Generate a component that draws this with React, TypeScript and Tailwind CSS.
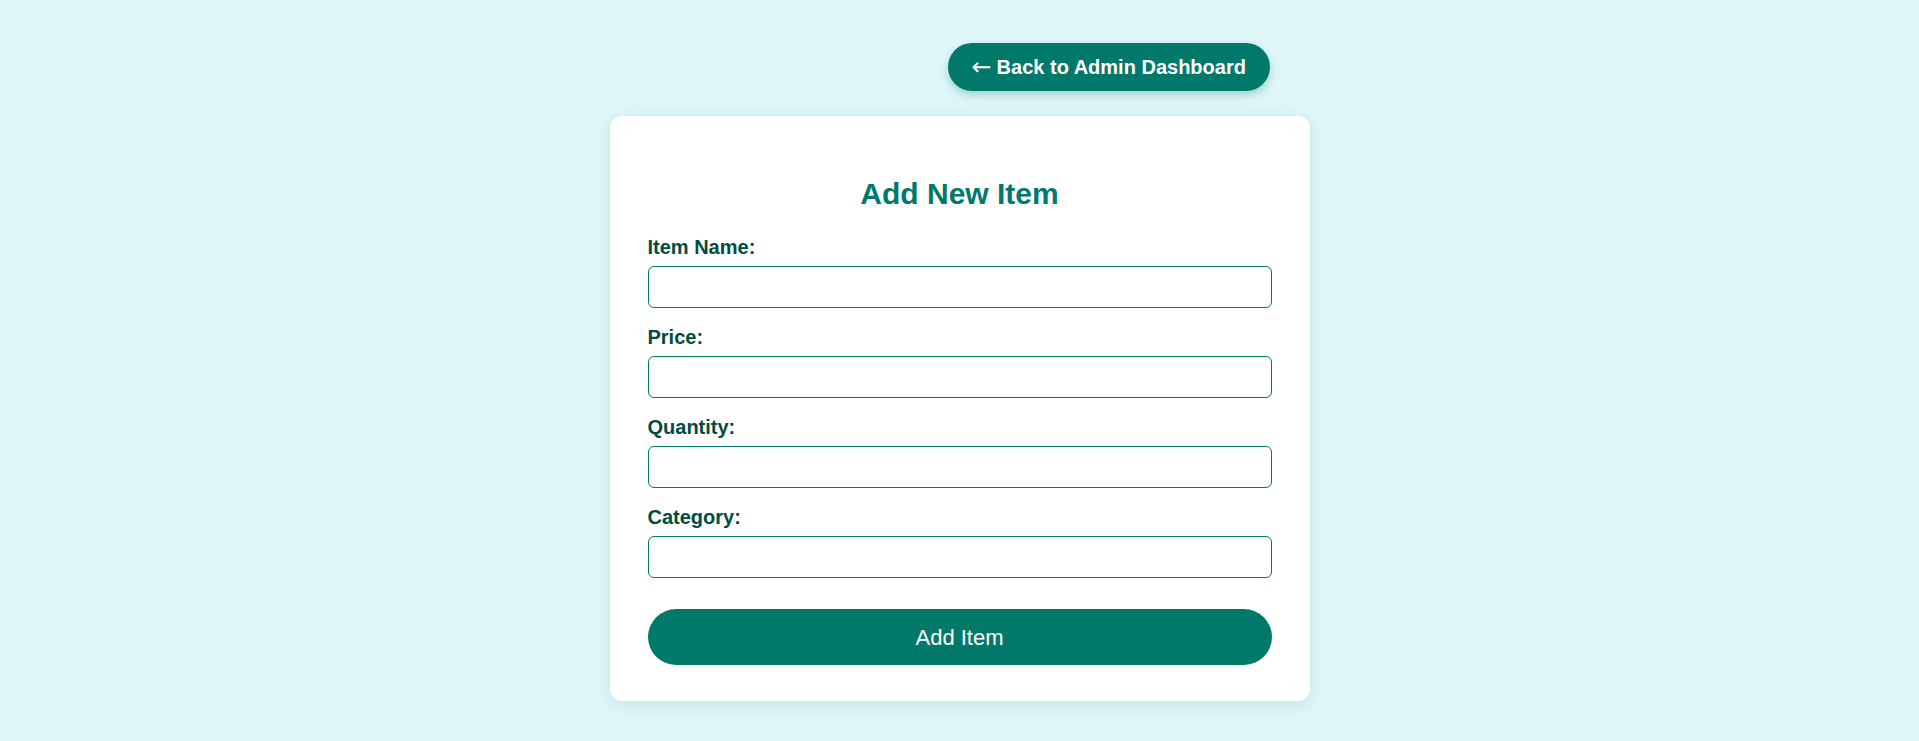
import React from "react";

const fields = ["Item Name:", "Price:", "Quantity:", "Category:"];

export default function App() {
  return (
    <div
      className="min-h-screen w-full bg-[#e0f7fa] pt-[43px]"
      style={{ fontFamily: '"Liberation Sans", Arial, sans-serif' }}
    >
      <div className="mx-auto flex w-[700px]">
        <button className="ml-[338px] flex h-[48px] items-center rounded-full bg-[#00796b] px-[24px] text-[20px] font-bold text-white shadow-[0_4px_10px_rgba(0,121,107,0.3)]">
          <span className="mr-[5px] font-['DejaVu_Sans'] text-[24px] font-normal leading-none">←</span>
          Back to Admin Dashboard
        </button>
      </div>
      <div className="mx-auto mt-[25px] w-[700px] rounded-[12px] bg-white px-[38px] pb-[36px] pt-[38px] shadow-[0_4px_20px_rgba(0,121,107,0.15)]">
        <h2 className="mt-[23px] mb-[25px] text-center text-[30px] font-bold leading-[34px] text-[#00796b]">
          Add New Item
        </h2>
        {fields.map((f) => (
          <div key={f}>
            <label className="mb-[7px] block text-[20px] font-bold leading-[23px] text-[#004d40]">
              {f}
            </label>
            <input
              type="text"
              className="mb-[18px] block h-[42px] w-full rounded-[6px] border border-[#00796b] bg-white px-3 text-[20px] outline-none"
            />
          </div>
        ))}
        <button className="mt-[31px] flex h-[56px] w-full items-center justify-center rounded-full bg-[#00796b] text-[22px] text-white">
          Add Item
        </button>
      </div>
    </div>
  );
}
